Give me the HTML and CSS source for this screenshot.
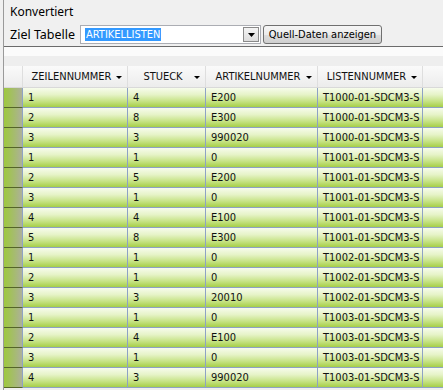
FILE: index.html
```html
<!DOCTYPE html>
<html lang="de">
<head>
    <meta charset="UTF-8">
    <title>Konvertierung</title>
    <link rel="stylesheet" href="styles.css">
</head>
<body>
    <div class="frame">
        <div class="top">
            <div class="status">Konvertiert</div>
            <div class="toolbar">
                <span class="label">Ziel Tabelle</span>
                <div class="combo">
                    <span class="combo-value">ARTIKELLISTEN</span>
                    <span class="combo-btn">
                        <svg width="7" height="4" viewBox="0 0 7 4"><path d="M0 0h7L3.5 4z" fill="#000"/></svg>
                    </span>
                </div>
                <button class="btn">Quell-Daten anzeigen</button>
            </div>
        </div>

        <div class="grid">
            <div class="group-panel"></div>
            <div class="header">
                <div class="hcell ind"></div>
                <div class="hcell c1"><span class="htext">ZEILENNUMMER</span><span class="arrow"></span></div>
                <div class="hcell c2"><span class="htext">STUECK</span><span class="arrow"></span></div>
                <div class="hcell c3"><span class="htext">ARTIKELNUMMER</span><span class="arrow"></span></div>
                <div class="hcell c4"><span class="htext">LISTENNUMMER</span><span class="arrow"></span></div>
                <div class="hcell fill"></div>
            </div>
            <div class="rows" id="rows"></div>
        </div>
    </div>

    <script>
        // Zeilen der Quelltabelle
        const data = [
            [1, 4, 'E200', 'T1000-01-SDCM3-S'],
            [2, 8, 'E300', 'T1000-01-SDCM3-S'],
            [3, 3, '990020', 'T1000-01-SDCM3-S'],
            [1, 1, '0', 'T1001-01-SDCM3-S'],
            [2, 5, 'E200', 'T1001-01-SDCM3-S'],
            [3, 1, '0', 'T1001-01-SDCM3-S'],
            [4, 4, 'E100', 'T1001-01-SDCM3-S'],
            [5, 8, 'E300', 'T1001-01-SDCM3-S'],
            [1, 1, '0', 'T1002-01-SDCM3-S'],
            [2, 1, '0', 'T1002-01-SDCM3-S'],
            [3, 3, '20010', 'T1002-01-SDCM3-S'],
            [1, 1, '0', 'T1003-01-SDCM3-S'],
            [2, 4, 'E100', 'T1003-01-SDCM3-S'],
            [3, 1, '0', 'T1003-01-SDCM3-S'],
            [4, 3, '990020', 'T1003-01-SDCM3-S']
        ];

        const rows = document.getElementById('rows');
        data.forEach(r => {
            const row = document.createElement('div');
            row.className = 'row';
            row.innerHTML = '<div class="cell ind"></div>' +
                r.map((v, i) => '<div class="cell c' + (i + 1) + '">' + v + '</div>').join('') +
                '<div class="cell fill"></div>';
            rows.appendChild(row);
        });
    </script>
</body>
</html>
```

FILE: styles.css
```css
:root {
    --bg: #f0f0f0;
    --line: #8ea2c4;
    --ind-line: #55652a;
}
body {
    margin: 0;
    background-color: var(--bg);
    overflow: hidden;
    height: 390px;
}
.frame {
    margin-left: 3px;
    border-left: 1px solid #9a9a9a;
    height: 390px;
    overflow: hidden;
}
.top {
    padding: 4px 0 0 6px;
    font-family: "Noto Sans", sans-serif;
    font-size: 12px;
    color: #000;
}
.status {
    height: 15px;
    line-height: 15px;
}
.toolbar {
    display: flex;
    align-items: center;
    margin-top: 6px;
    height: 19px;
}
.label {
    width: 70px;
    font-size: 12.5px;
}
.combo {
    box-sizing: border-box;
    width: 181px;
    height: 19px;
    border: 1px solid #abadb3;
    background: #fff;
    display: flex;
    align-items: center;
    padding: 1px 1px 1px 4px;
}
.combo-value {
    font-family: "DejaVu Sans Condensed", "DejaVu Sans", sans-serif;
    font-stretch: condensed;
    font-size: 11px;
    line-height: 13px;
    background: #3399ff;
    color: #fff;
    padding: 0 1px;
}
.combo-btn {
    margin-left: auto;
    box-sizing: border-box;
    width: 16px;
    height: 15px;
    border: 1px solid #8a8a8a;
    background: linear-gradient(#f4f4f4, #dcdcdc);
    display: flex;
    align-items: center;
    justify-content: center;
}
.btn {
    box-sizing: border-box;
    margin-left: 2px;
    width: 119px;
    height: 19px;
    padding: 0;
    border: 1px solid #707070;
    border-radius: 3px;
    background: linear-gradient(#f6f6f6 0%, #ebebeb 50%, #dddddd 51%, #cfcfcf 100%);
    font-family: "DejaVu Sans Condensed", "DejaVu Sans", sans-serif;
    font-stretch: condensed;
    font-size: 11px;
    color: #000;
}
.grid {
    margin-top: 2px;
    border-top: 1px solid #6b6b6b;
    font-family: "DejaVu Sans Condensed", "DejaVu Sans", sans-serif;
    font-stretch: condensed;
    font-size: 11px;
    color: #111;
}
.group-panel {
    height: 19px;
    background: linear-gradient(#fbfbfb 0 48%, #eeeeee 48% 100%);
}
.header, .row {
    display: flex;
}
.header {
    height: 22px;
    background: linear-gradient(#fafafa, #ececec);
    border-bottom: 1px solid #d9d9d9;
    box-sizing: border-box;
}
.ind { width: 19px; }
.c1 { width: 105px; }
.c2 { width: 78px; }
.c3 { width: 112px; }
.c4 { width: 105px; }
.fill { flex: 1; }
.hcell, .cell {
    box-sizing: border-box;
    flex-shrink: 0;
}
.hcell {
    display: flex;
    align-items: center;
    border-right: 1px solid #dedede;
    padding-right: 5px;
}
.hcell.fill { border-right: none; }
.htext {
    flex: 1;
    text-align: center;
    padding-left: 4px;
}
.arrow {
    width: 0;
    height: 0;
    border-left: 3px solid transparent;
    border-right: 3px solid transparent;
    border-top: 3px solid #000;
    margin-top: 1px;
}
.row {
    height: 20px;
    box-sizing: border-box;
}
.cell {
    display: flex;
    align-items: center;
    padding-left: 5px;
    border-right: 1px solid var(--line);
    border-bottom: 1px solid var(--line);
    background: linear-gradient(#f7fcec 0%, #e6f3c8 35%, #c6e385 70%, #a6cf48 100%);
}
.cell.fill { border-right: none; }
.cell.ind {
    border-right: 1px solid var(--line);
    border-bottom: 1px solid var(--ind-line);
    border-left: 1px solid var(--ind-line);
    margin-left: -1px;
    width: 20px;
    background: linear-gradient(to right, #9ec83e, #a6bb72 60%, #adb09a);
}
```
